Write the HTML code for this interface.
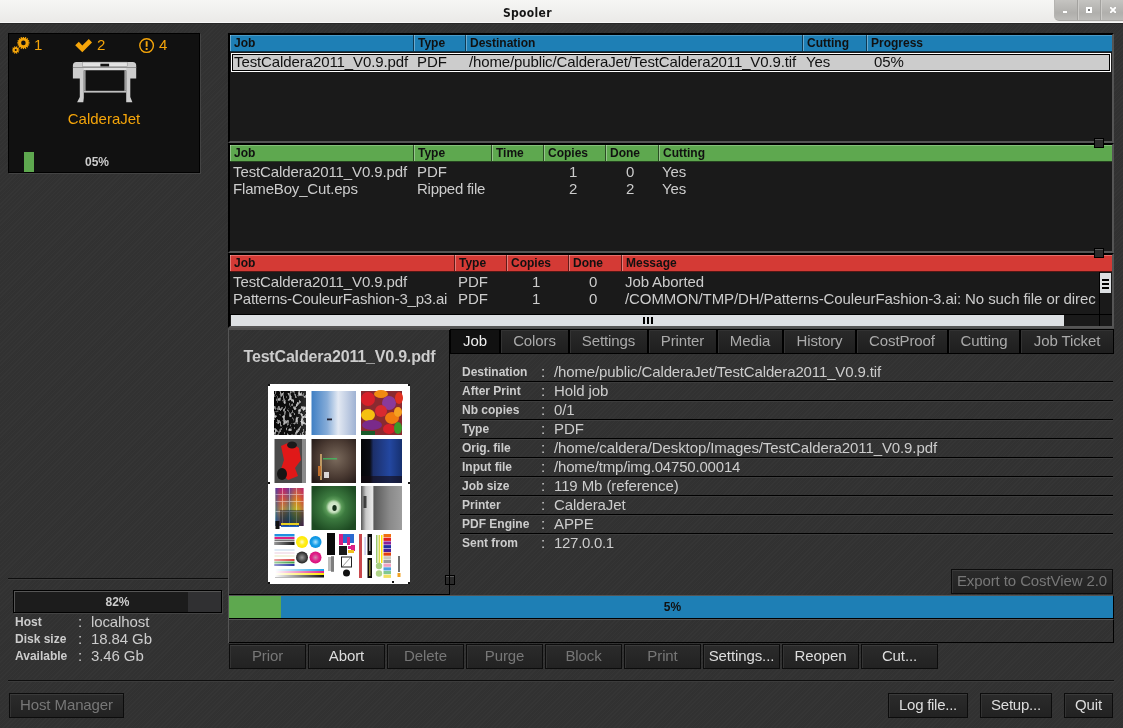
<!DOCTYPE html>
<html>
<head>
<meta charset="utf-8">
<title>Spooler</title>
<style>
*{box-sizing:border-box;margin:0;padding:0}
html,body{width:1123px;height:728px;overflow:hidden}
body{background:#323232 repeating-linear-gradient(135deg,rgba(255,255,255,.016) 0,rgba(255,255,255,.016) 1px,rgba(0,0,0,.012) 1px,rgba(0,0,0,.012) 3px);font-family:"Liberation Sans",sans-serif;font-size:15px;color:#ccc;position:relative}
.abs{position:absolute}
#titlebar{left:0;top:0;width:1123px;height:23px;background:linear-gradient(#f6f6f4,#ebeae8);border-bottom:1px solid #f8f8f8}
#title{left:503px;top:5px;font-family:"DejaVu Sans Condensed","DejaVu Sans",sans-serif;font-weight:bold;font-size:12px;color:#151515;letter-spacing:0.3px;line-height:16px}
#winbtns{left:1054px;top:0;width:69px;height:21px;background:linear-gradient(#c5c4c1,#b0afac 65%,#bcbbb8);border-bottom-left-radius:5px;border-left:1px solid #b5b4b1;border-bottom:1px solid #a8a7a4}
.wsep{top:0;width:1px;height:20px;background:#a3a29f;border-right:1px solid #cdccc9;box-sizing:content-box}
/* printer panel */
#ppanel{left:8px;top:33px;width:192px;height:140px;background:#111;border:1px solid #000;box-shadow:1px 1px 0 #444}
.org{color:#f5a50a}
/* tables */
.tbl{left:228px;width:886px;background:#1a1a1a;border-left:2px solid #000;border-top:2px solid #000;border-right:2px solid #555;border-bottom:2px solid #555}
.tbl>*{margin:-2px 0 0 -2px}
.hdr{left:2px;height:17px;border-bottom:1px solid rgba(0,0,0,.6);font-weight:bold;font-size:12px;color:#111;line-height:16px}
.hc{position:absolute;top:0;height:16px;padding-left:4px;border-right:1px solid rgba(0,0,0,.55);white-space:nowrap}
.hc:before{content:"";position:absolute;left:0;top:0;width:1px;height:16px;background:rgba(255,255,255,.35)}
.row{position:absolute;left:2px;height:17px;line-height:17px;white-space:nowrap;font-size:15px;color:#ccc;letter-spacing:-0.1px}
.row span{position:absolute;top:0}
/* buttons */
.btn{position:absolute;height:25px;border:1px solid #0c0c0c;background:linear-gradient(#2b2b2b,#222);box-shadow:inset 0 1px 0 #3a3a3a,inset 1px 0 0 #333;text-align:center;line-height:21px;font-size:15px;color:#ddd;white-space:nowrap;letter-spacing:-0.1px}
.btn.dis{color:#777}
.hline{position:absolute;height:2px;background:#0e0e0e;border-bottom:1px solid #3c3c3c}
.lab{position:absolute;font-weight:bold;font-size:12px;color:#ccc;white-space:nowrap}
.val{position:absolute;font-size:15px;color:#ccc;white-space:nowrap;letter-spacing:-0.1px}
.sash{width:10px;height:10px;background:#2b2b2b;border:1px solid #000;box-shadow:inset 0 1px 0 #585858}
.tab{position:absolute;top:330px;height:23px;background:linear-gradient(#2a2a2a,#1e1e1e);text-align:center;line-height:22px;font-size:15px;color:#aaa;white-space:nowrap;box-shadow:inset 1px 1px 0 #333;letter-spacing:-0.1px}
.tab.sel{background:#111;color:#eee;box-shadow:none}
body>*{will-change:transform}
</style>
</head>
<body>
<div id="titlebar" class="abs"></div>
<div class="abs" style="left:0;top:23px;width:1123px;height:1px;background:#272727"></div>
<div id="title" class="abs">Spooler</div>
<div id="winbtns" class="abs">
<div class="abs wsep" style="left:22px"></div><div class="abs wsep" style="left:45px"></div>
<div class="abs" style="left:8px;top:11px;width:4px;height:2px;background:#fff"></div>
<div class="abs" style="left:31px;top:7px;width:6px;height:6px;border:2px solid #fff;background:#777"></div>
<svg class="abs" style="left:55px;top:7px" width="6" height="6" viewBox="0 0 6 6"><path d="M0.800 0.800 L5.200 5.200 M5.200 0.800 L0.800 5.200" stroke="#fff" stroke-width="1.900" stroke-linecap="square"/></svg>
</div>

<!-- printer panel -->
<div id="ppanel" class="abs">
  <svg class="abs" style="left:3px;top:3px" width="20" height="20" viewBox="0 0 20 20"><g fill="#f5a50a"><circle cx="11.4" cy="5.9" r="5.2"/><g stroke="#f5a50a" stroke-width="1.3"><line x1="5.20" y1="5.90" x2="17.60" y2="5.90"/><line x1="5.67" y1="3.53" x2="17.13" y2="8.27"/><line x1="7.02" y1="1.52" x2="15.78" y2="10.28"/><line x1="9.03" y1="0.17" x2="13.77" y2="11.63"/><line x1="11.40" y1="-0.30" x2="11.40" y2="12.10"/><line x1="13.77" y1="0.17" x2="9.03" y2="11.63"/><line x1="15.78" y1="1.52" x2="7.02" y2="10.28"/><line x1="17.13" y1="3.53" x2="5.67" y2="8.27"/></g><circle cx="11.4" cy="5.9" r="2.3" fill="#111"/><circle cx="3.7" cy="13" r="2.7"/><g stroke="#f5a50a" stroke-width="1.1"><line x1="-0.10" y1="13.00" x2="7.50" y2="13.00"/><line x1="0.63" y1="10.77" x2="6.77" y2="15.23"/><line x1="2.53" y1="9.39" x2="4.87" y2="16.61"/><line x1="4.87" y1="9.39" x2="2.53" y2="16.61"/><line x1="6.77" y1="10.77" x2="0.63" y2="15.23"/></g><circle cx="3.7" cy="13" r="1.0" fill="#111"/></g></svg>
  <div class="abs org" style="left:25px;top:2px;line-height:17px">1</div>
  <svg class="abs" style="left:65px;top:5px" width="20" height="15" viewBox="0 0 20 15">
    <path d="M1.2 6.300 L4.800 2.800 L8.300 6.500 L14.800 0 L18 3.400 L8.300 13.200 Z" fill="#f5a50a"/>
  </svg>
  <div class="abs org" style="left:88px;top:2px;line-height:17px">2</div>
  <svg class="abs" style="left:129px;top:3px" width="18" height="18" viewBox="0 0 18 18">
    <circle cx="8.6" cy="8.600" r="6.800" fill="none" stroke="#f5a50a" stroke-width="1.400"/>
    <rect x="7.7" y="4.200" width="1.9" height="5.6" fill="#f5a50a"/>
    <rect x="7.7" y="11" width="1.9" height="2" fill="#f5a50a"/>
  </svg>
  <div class="abs org" style="left:150px;top:2px;line-height:17px">4</div>
  <svg class="abs" style="left:63px;top:27px" width="66" height="43" viewBox="0 0 66 43">
    <path d="M0.900 4.600 Q0.900 1.100 4.400 1.100 L60.700 1.100 Q64.200 1.100 64.200 4.600 L64.200 17.600 L0.900 17.600 Z" fill="#cdcdcd"/>
    <path d="M7.800 17 L11.800 17 L11.800 37 L11.300 41.300 L5.100 41.300 L7.800 36 Z" fill="#cdcdcd"/>
    <path d="M54.200 17 L58.300 17 L58.300 36 L60.400 41.300 L54.200 41.300 Z" fill="#cdcdcd"/>
    <rect x="11.800" y="29.800" width="42.400" height="1.800" fill="#c0c0c0"/>
    <rect x="0.900" y="6.100" width="63.300" height="0.900" fill="#8c8c8c"/>
    <rect x="11.800" y="7" width="42.400" height="2.500" fill="#dedede"/>
    <rect x="11.800" y="9.500" width="42.400" height="8.200" fill="#111"/>
    <rect x="11.800" y="9.500" width="2" height="20.300" fill="#9a9a9a"/>
    <rect x="52.200" y="9.500" width="2" height="20.300" fill="#9a9a9a"/>
    <rect x="13.800" y="9.500" width="38.400" height="19.400" fill="#111"/>
    <rect x="10.300" y="1.100" width="44.900" height="4.300" fill="#e2e2e2" stroke="#8a8a8a" stroke-width="0.500"/>
    <rect x="28.400" y="2.700" width="8.700" height="2.700" fill="#111"/>
  </svg>
  <div class="abs org" style="left:0;top:76px;width:190px;text-align:center;line-height:17px">CalderaJet</div>
  <div class="abs" style="left:15px;top:118px;width:10px;height:20px;background:#5ea84f"></div>
  <div class="abs" style="left:63px;top:121px;width:50px;text-align:center;font-weight:bold;font-size:12px;line-height:14px;color:#ccc">05%</div>
</div>

<!-- table 1 -->
<div class="abs tbl" id="t1" style="top:33px;height:110px">
  <div class="abs hdr" style="top:2px;width:882px;background:#1e7fb5;box-shadow:inset 0 1px 0 #4c9bc7">
    <div class="hc" style="left:0;width:184px">Job</div>
    <div class="hc" style="left:184px;width:52px">Type</div>
    <div class="hc" style="left:236px;width:337px">Destination</div>
    <div class="hc" style="left:573px;width:64px">Cutting</div>
    <div class="hc" style="left:637px;width:245px;border-right:0">Progress</div>
  </div>
  <div class="abs" style="left:3px;top:20px;width:880px;height:19px;background:#ccc;border:1px solid #fff;box-shadow:inset 0 0 0 1px #000"></div>
  <div class="row" style="top:19px;width:879px;height:19px;line-height:19px;color:#111">
    <span style="left:4px">TestCaldera2011_V0.9.pdf</span><span style="left:187px">PDF</span><span style="left:239px;letter-spacing:-0.13px">/home/public/CalderaJet/TestCaldera2011_V0.9.tif</span><span style="left:576px">Yes</span><span style="left:644px">05%</span>
  </div>
</div>
<!-- table 2 -->
<div class="abs tbl" id="t2" style="top:143px;height:110px">
  <div class="abs hdr" style="top:2px;width:882px;background:#5ea84f;box-shadow:inset 0 1px 0 #86c07a">
    <div class="hc" style="left:0;width:184px">Job</div>
    <div class="hc" style="left:184px;width:78px">Type</div>
    <div class="hc" style="left:262px;width:52px">Time</div>
    <div class="hc" style="left:314px;width:62px">Copies</div>
    <div class="hc" style="left:376px;width:53px">Done</div>
    <div class="hc" style="left:429px;width:453px;border-right:0">Cutting</div>
  </div>
  <div class="row" style="top:20px;width:879px">
    <span style="left:3px">TestCaldera2011_V0.9.pdf</span><span style="left:187px">PDF</span><span style="left:339px">1</span><span style="left:396px">0</span><span style="left:432px">Yes</span>
  </div>
  <div class="row" style="top:37px;width:879px">
    <span style="left:3px;letter-spacing:-0.17px">FlameBoy_Cut.eps</span><span style="left:187px;letter-spacing:-0.25px">Ripped file</span><span style="left:339px">2</span><span style="left:396px">2</span><span style="left:432px">Yes</span>
  </div>
</div>
<!-- table 3 -->
<div class="abs tbl" id="t3" style="top:253px;height:75px">
  <div class="abs hdr" style="top:2px;width:882px;background:#d43a35;box-shadow:inset 0 1px 0 #e5706b">
    <div class="hc" style="left:0;width:225px">Job</div>
    <div class="hc" style="left:225px;width:52px">Type</div>
    <div class="hc" style="left:277px;width:62px">Copies</div>
    <div class="hc" style="left:339px;width:53px">Done</div>
    <div class="hc" style="left:392px;width:490px;border-right:0">Message</div>
  </div>
  <div class="row" style="top:20px;width:868px;overflow:hidden">
    <span style="left:3px">TestCaldera2011_V0.9.pdf</span><span style="left:228px">PDF</span><span style="left:302px">1</span><span style="left:359px">0</span><span style="left:395px">Job Aborted</span>
  </div>
  <div class="row" style="top:37px;width:866px;overflow:hidden">
    <span style="left:3px;letter-spacing:-0.22px">Patterns-CouleurFashion-3_p3.ai</span><span style="left:228px">PDF</span><span style="left:302px">1</span><span style="left:359px">0</span><span style="left:395px;letter-spacing:-0.093px">/COMMON/TMP/DH/Patterns-CouleurFashion-3.ai: No such file or directory</span>
  </div>
</div>

<!-- scrollbars table 3 -->
<div class="abs" style="left:230px;top:314px;width:870px;height:12px;background:#1a1a1a;border-top:1px solid #000"></div>
<div class="abs" style="left:231px;top:315px;width:833px;height:11px;background:#dde0e3"></div>
<div class="abs" style="left:643px;top:317px;width:2px;height:7px;background:#000;box-shadow:4px 0 0 #000,8px 0 0 #000"></div>
<div class="abs" style="left:1099px;top:272px;width:13px;height:54px;background:#1a1a1a;border-left:1px solid #000"></div>
<div class="abs" style="left:1100px;top:273px;width:11px;height:20px;background:#dde0e3"></div>
<div class="abs" style="left:1102px;top:279px;width:7px;height:2px;background:#000;box-shadow:0 4px 0 #000,0 8px 0 #000"></div>
<div class="abs" style="left:1099px;top:314px;width:13px;height:1px;background:#000"></div>
<!-- sash handles -->
<div class="abs sash" style="left:1094px;top:138px"></div>
<div class="abs sash" style="left:1094px;top:248px"></div>
<div class="abs sash" style="left:445px;top:575px"></div>

<!-- details frame -->
<div class="abs" style="left:228px;top:328px;width:886px;height:315px;border-top:2px solid #4d4d4d;border-left:1px solid #555"></div>
<div class="abs" style="left:229px;top:330px;width:221px;height:265px;border-right:1px solid #000;border-bottom:1px solid #000"></div>
<div class="abs" style="left:229.500px;top:347px;width:219px;text-align:center;font-weight:bold;font-size:16px;line-height:20px;color:#ccc;letter-spacing:-0.18px">TestCaldera2011_V0.9.pdf</div>

<svg class="abs" style="left:268px;top:384px" width="142" height="200" viewBox="0 0 142 200">
<defs>
<linearGradient id="sky" x1="0" y1="0" x2="1" y2="0"><stop offset="0" stop-color="#3f7fc4"/><stop offset=".35" stop-color="#86acd8"/><stop offset=".6" stop-color="#e3e9f3"/><stop offset="1" stop-color="#9fb2d3"/></linearGradient>
<linearGradient id="bw" x1="0" y1="0" x2="1" y2="0"><stop offset="0" stop-color="#1b1b1b"/><stop offset=".7" stop-color="#3a3a3a"/><stop offset="1" stop-color="#9a9a9a"/></linearGradient>
<radialGradient id="city" cx=".55" cy=".45" r=".7"><stop offset="0" stop-color="#7a6a5c"/><stop offset=".6" stop-color="#4a3a32"/><stop offset="1" stop-color="#241a18"/></radialGradient>
<linearGradient id="nb" x1="0" y1="0" x2="1" y2="0"><stop offset="0" stop-color="#050608"/><stop offset=".22" stop-color="#0a0c14"/><stop offset=".3" stop-color="#1c2f6a"/><stop offset=".7" stop-color="#2347a0"/><stop offset="1" stop-color="#16306f"/></linearGradient>
<radialGradient id="grn" cx=".5" cy=".48" r=".6"><stop offset="0" stop-color="#e6f2e0"/><stop offset=".2" stop-color="#c5e0bd"/><stop offset=".3" stop-color="#5a9a58"/><stop offset=".45" stop-color="#3c7a3f"/><stop offset="1" stop-color="#1d4a22"/></radialGradient>
<linearGradient id="cl" x1="0" y1="0" x2="1" y2="0"><stop offset="0" stop-color="#555"/><stop offset=".12" stop-color="#c8c8c8"/><stop offset=".28" stop-color="#e8e8e8"/><stop offset=".32" stop-color="#5a5a5a"/><stop offset=".7" stop-color="#8a8a8a"/><stop offset="1" stop-color="#9d9d9d"/></linearGradient>
<linearGradient id="ch" x1="0" y1="0" x2="0" y2="1"><stop offset="0" stop-color="#b0207a"/><stop offset=".3" stop-color="#d86a20"/><stop offset=".55" stop-color="#b5b820"/><stop offset=".8" stop-color="#2a7a3a"/><stop offset="1" stop-color="#1a2a5a"/></linearGradient>
<linearGradient id="chx" x1="0" y1="0" x2="1" y2="0"><stop offset="0" stop-color="#2050b0" stop-opacity=".7"/><stop offset=".25" stop-color="#d02070" stop-opacity=".3"/><stop offset=".5" stop-color="#2050b0" stop-opacity=".5"/><stop offset=".75" stop-color="#e0a020" stop-opacity=".3"/><stop offset="1" stop-color="#c02060" stop-opacity=".5"/></linearGradient>
<radialGradient id="yel"><stop offset="0" stop-color="#fffbd0"/><stop offset=".5" stop-color="#ffee20"/><stop offset="1" stop-color="#ffe800"/></radialGradient>
<radialGradient id="cya"><stop offset="0" stop-color="#b0e4ff"/><stop offset=".6" stop-color="#18a0e8"/><stop offset="1" stop-color="#0a90e0"/></radialGradient>
<radialGradient id="blk"><stop offset="0" stop-color="#999"/><stop offset=".7" stop-color="#444"/><stop offset="1" stop-color="#222"/></radialGradient>
<radialGradient id="mag"><stop offset="0" stop-color="#d08ab0"/><stop offset=".6" stop-color="#e0208a"/><stop offset="1" stop-color="#d8107a"/></radialGradient>
<linearGradient id="fade" x1="0" y1="0" x2="1" y2="0"><stop offset="0" stop-color="#fff"/><stop offset="1" stop-color="#fff" stop-opacity="0"/></linearGradient>
<filter id="nz" x="0" y="0" width="1" height="1"><feTurbulence type="fractalNoise" baseFrequency="0.33 0.22" numOctaves="2" seed="7"/><feColorMatrix type="matrix" values="4.500 0 0 0 -2.350  4.500 0 0 0 -2.350  4.500 0 0 0 -2.350  0 0 0 0 1"/></filter>
<filter id="nz2" x="0" y="0" width="1" height="1"><feTurbulence type="fractalNoise" baseFrequency="0.12 0.05" numOctaves="3" seed="11"/><feColorMatrix type="matrix" values="1.600 0 0 0 -0.150  1.600 0 0 0 -0.150  1.600 0 0 0 -0.150  0 0 0 0 1"/></filter>
<filter id="bl"><feGaussianBlur stdDeviation="0.45"/></filter>
</defs>
<rect width="142" height="200" fill="#fff"/>
<g fill="#111"><rect x="0" y="0" width="2" height="2"/><rect x="140" y="0" width="2" height="2"/><rect x="0" y="98" width="2" height="2"/><rect x="140" y="98" width="2" height="2"/><rect x="0" y="198" width="2" height="2"/><rect x="140" y="198" width="2" height="2"/><rect x="124" y="197" width="2" height="2"/></g>
<!-- row1 -->
<rect x="6.500" y="7" width="31.500" height="44" fill="#333" filter="url(#nz)"/>
<rect x="6.500" y="7" width="31.500" height="44" fill="url(#bw)" opacity=".3"/>
<rect x="43.500" y="7" width="44.500" height="44" fill="url(#sky)"/>
<rect x="59" y="34.500" width="5" height="1.800" fill="#223"/>
<rect x="93" y="7" width="41" height="44" fill="#8a2a30"/>
<g><ellipse cx="100" cy="15" rx="7" ry="7" fill="#d8202a"/><ellipse cx="113" cy="10" rx="7" ry="4" fill="#f08a10"/><ellipse cx="121" cy="19" rx="7" ry="7" fill="#8a3a9a"/><ellipse cx="131" cy="14" rx="4" ry="6" fill="#e03020"/><ellipse cx="100" cy="31" rx="7" ry="6" fill="#f5c010"/><ellipse cx="113" cy="27" rx="6" ry="6" fill="#d82a30"/><ellipse cx="124" cy="34" rx="7" ry="6" fill="#f07a10"/><ellipse cx="104" cy="41" rx="10" ry="5" fill="#7a2a8a"/><ellipse cx="121" cy="45" rx="6" ry="5" fill="#d8202a"/><ellipse cx="130" cy="44" rx="4" ry="6" fill="#3a9a2a"/><ellipse cx="130" cy="28" rx="4" ry="5" fill="#f5a020"/><rect x="93" y="47" width="14" height="4" fill="#1a5a2a"/></g>
<!-- row2 -->
<rect x="6.500" y="55" width="31.500" height="44" fill="#4a4a4a"/>
<rect x="34" y="55" width="4" height="44" fill="#8a8a8a"/>
<path d="M13 62 L22 58 L31 64 L33 76 L27 84 L30 92 L20 96 L12 88 L16 76 Z" fill="#e01818"/>
<ellipse cx="14" cy="90" rx="5" ry="6" fill="#151515"/><ellipse cx="24" cy="61" rx="5" ry="3.500" fill="#1a1a1a"/>
<rect x="43.500" y="55" width="44.500" height="44" fill="url(#city)"/>
<g fill="#d8b070" opacity=".8"><rect x="52" y="70" width="2" height="26"/><rect x="55" y="74" width="14" height="1.500" fill="#40c060"/><rect x="50" y="82" width="3" height="10" fill="#e08030"/><rect x="56" y="88" width="5" height="6" fill="#fff"/></g>
<rect x="93" y="55" width="41" height="44" fill="url(#nb)"/>
<rect x="93" y="92" width="41" height="7" fill="#140a10" opacity=".6"/>
<!-- row3 -->
<rect x="6.500" y="102" width="31.500" height="44" fill="#fff"/>
<rect x="7.500" y="104" width="28" height="38" fill="url(#ch)"/><rect x="7.500" y="104" width="28" height="38" fill="url(#chx)"/>
<g fill="#fff" opacity=".5"><rect x="7.500" y="110" width="28" height=".8"/><rect x="7.500" y="117" width="28" height=".8"/><rect x="7.500" y="127" width="28" height=".8"/><rect x="14" y="104" width=".8" height="38"/><rect x="21" y="104" width=".8" height="38"/><rect x="28" y="104" width=".8" height="38"/></g>
<rect x="12" y="126" width="23.500" height="16" fill="#101830" opacity=".45"/><rect x="7.500" y="137" width="4" height="8" fill="#111"/><rect x="13" y="139" width="18" height="2" fill="#e8d020"/><rect x="13" y="141.500" width="18" height="1.500" fill="#2060c0"/>
<rect x="43.500" y="102" width="44.500" height="44" fill="url(#grn)"/>
<ellipse cx="66.500" cy="124" rx="2.200" ry="3" fill="#15301a"/>
<rect x="93" y="102" width="41" height="44" fill="url(#cl)"/>
<rect x="95.500" y="112" width="3" height="12" fill="#222" opacity=".8"/>
<!-- row4 -->
<g>
<rect x="6.500" y="150" width="20" height="2.500" fill="#2090e0"/><rect x="6.500" y="153" width="20" height="2" fill="#e02080"/><rect x="6.500" y="155.500" width="20" height="2" fill="#777"/><rect x="6.500" y="158" width="20" height="3" fill="#151515"/><rect x="6.500" y="157" width="20" height="4" fill="url(#fade)" opacity=".55"/>
<rect x="6.500" y="165" width="20" height="2" fill="#dfeaf5"/><rect x="6.500" y="168" width="20" height="2" fill="#f5e6ee"/><rect x="6.500" y="171" width="20" height="2" fill="#f3f3df"/>
<rect x="6.500" y="175" width="20" height="2" fill="#d84040"/><rect x="6.500" y="177.500" width="20" height="2" fill="#3a9a40"/><rect x="6.500" y="180" width="20" height="2" fill="#2a30a0"/><rect x="6.500" y="175" width="20" height="7" fill="url(#fade)" opacity=".5"/>
<circle cx="34" cy="158" r="6" fill="url(#yel)"/><circle cx="47.500" cy="158" r="6" fill="url(#cya)"/><circle cx="34" cy="173.500" r="6" fill="url(#blk)"/><circle cx="47.500" cy="173.500" r="6" fill="url(#mag)"/>
<rect x="7" y="185" width="49" height="2" fill="#18a0e8"/><rect x="7" y="187" width="49" height="2" fill="#e0208a"/><rect x="7" y="189" width="49" height="2" fill="#ffe800"/><rect x="7" y="191" width="49" height="2.500" fill="#111"/><rect x="7" y="185" width="49" height="8.500" fill="url(#fade)"/>
<rect x="59" y="149" width="8" height="22" fill="#0a0a0a"/><rect x="60" y="173" width="6" height="14" fill="#bbb"/><rect x="63" y="172" width="3" height="16" fill="#555" opacity=".6"/>
<rect x="71" y="150" width="15" height="9" fill="#2a6ad0"/><rect x="71" y="150" width="4" height="11" fill="#d82080"/><rect x="79" y="153" width="3" height="8" fill="#d82080"/><rect x="83" y="161" width="4" height="6" fill="#d82080"/><rect x="71" y="162" width="8" height="9" fill="#1a1a1a"/><rect x="80" y="166" width="6" height="3" fill="#f0c020"/><rect x="80" y="162" width="6" height="3" fill="#e0208a"/>
<rect x="73.500" y="173" width="10" height="10" fill="none" stroke="#222" stroke-width="1"/><line x1="74" y1="183" x2="83" y2="173" stroke="#555" stroke-width=".6"/>
<circle cx="78.500" cy="189" r="3.500" fill="#111"/>
<rect x="91" y="150" width="3" height="44" fill="#c8484c"/>
<rect x="96.500" y="153" width="1.200" height="18" fill="#9090e0" opacity=".6"/>
<rect x="99.500" y="150" width="4.500" height="21" fill="#0a0a0a"/><rect x="99.500" y="174" width="4.500" height="20" fill="#0a0a0a"/><rect x="101" y="176" width="1.500" height="16" fill="#c8c040" opacity=".7"/><rect x="101" y="153" width="1.500" height="14" fill="#ddd" opacity=".7"/>
<rect x="108" y="151" width="1.500" height="28" fill="#9ac870"/><rect x="110.500" y="151" width="1.500" height="28" fill="#d8d850"/><rect x="113" y="151" width="1.500" height="28" fill="#ffe800"/>
<rect x="115.500" y="150" width="7.500" height="3.200" fill="#f07010"/><rect x="115.500" y="153.700" width="7.500" height="3.200" fill="#e02020"/><rect x="115.500" y="157.400" width="7.500" height="3.200" fill="#8a209a"/><rect x="115.500" y="161.100" width="7.500" height="3.200" fill="#2030a0"/><rect x="115.500" y="164.800" width="7.500" height="3.200" fill="#4a209a"/><rect x="115.500" y="168.500" width="7.500" height="3.200" fill="#e04010"/><rect x="115.500" y="172.200" width="7.500" height="3.200" fill="#c8c8c0"/><rect x="115.500" y="175.900" width="7.500" height="3.200" fill="#9a9a9a"/><rect x="115.500" y="179.600" width="7.500" height="3.200" fill="#f0a0c0"/><rect x="115.500" y="183.300" width="7.500" height="3.200" fill="#50a0e0"/><rect x="115.500" y="187" width="7.500" height="3.200" fill="#80c890"/><rect x="115.500" y="190.700" width="7.500" height="3.200" fill="#f0e060"/>
<circle cx="111" cy="182" r="3.200" fill="#a8d080"/><circle cx="111" cy="189.500" r="3.200" fill="#b0d488"/>
<rect x="130" y="172" width="2" height="16" fill="#333" opacity=".7"/><rect x="129.500" y="189" width="3" height="4" fill="#f0a020"/>
</g>
</svg>
<!-- tabs -->
<div class="abs" style="left:450px;top:329px;width:664px;height:25px;background:#000"></div>
<div class="tab sel" style="left:451px;width:48px">Job</div><div class="tab" style="left:501px;width:67px">Colors</div><div class="tab" style="left:570px;width:77px">Settings</div><div class="tab" style="left:649px;width:67px">Printer</div><div class="tab" style="left:718px;width:64px">Media</div><div class="tab" style="left:784px;width:71px">History</div><div class="tab" style="left:857px;width:90px">CostProof</div><div class="tab" style="left:949px;width:70px">Cutting</div><div class="tab" style="left:1021px;width:92px">Job Ticket</div>
<!-- info -->
<div class="lab" style="left:462px;top:365px;line-height:14px">Destination</div><div class="val" style="left:541px;top:363px;line-height:17px">:</div><div class="val" style="left:554px;top:363px;line-height:17px;letter-spacing:-0.13px">/home/public/CalderaJet/TestCaldera2011_V0.9.tif</div>
<div class="abs" style="left:460px;top:381px;width:653px;height:2px;border-top:1px solid #000;border-bottom:1px solid #3d3d3d"></div>
<div class="lab" style="left:462px;top:384px;line-height:14px">After Print</div><div class="val" style="left:541px;top:382px;line-height:17px">:</div><div class="val" style="left:554px;top:382px;line-height:17px">Hold job</div>
<div class="abs" style="left:460px;top:400px;width:653px;height:2px;border-top:1px solid #000;border-bottom:1px solid #3d3d3d"></div>
<div class="lab" style="left:462px;top:403px;line-height:14px">Nb copies</div><div class="val" style="left:541px;top:401px;line-height:17px">:</div><div class="val" style="left:554px;top:401px;line-height:17px">0/1</div>
<div class="abs" style="left:460px;top:419px;width:653px;height:2px;border-top:1px solid #000;border-bottom:1px solid #3d3d3d"></div>
<div class="lab" style="left:462px;top:422px;line-height:14px">Type</div><div class="val" style="left:541px;top:420px;line-height:17px">:</div><div class="val" style="left:554px;top:420px;line-height:17px">PDF</div>
<div class="abs" style="left:460px;top:438px;width:653px;height:2px;border-top:1px solid #000;border-bottom:1px solid #3d3d3d"></div>
<div class="lab" style="left:462px;top:441px;line-height:14px">Orig. file</div><div class="val" style="left:541px;top:439px;line-height:17px">:</div><div class="val" style="left:554px;top:439px;line-height:17px">/home/caldera/Desktop/Images/TestCaldera2011_V0.9.pdf</div>
<div class="abs" style="left:460px;top:457px;width:653px;height:2px;border-top:1px solid #000;border-bottom:1px solid #3d3d3d"></div>
<div class="lab" style="left:462px;top:460px;line-height:14px">Input file</div><div class="val" style="left:541px;top:458px;line-height:17px">:</div><div class="val" style="left:554px;top:458px;line-height:17px;letter-spacing:-0.19px">/home/tmp/img.04750.00014</div>
<div class="abs" style="left:460px;top:476px;width:653px;height:2px;border-top:1px solid #000;border-bottom:1px solid #3d3d3d"></div>
<div class="lab" style="left:462px;top:479px;line-height:14px">Job size</div><div class="val" style="left:541px;top:477px;line-height:17px">:</div><div class="val" style="left:554px;top:477px;line-height:17px">119 Mb (reference)</div>
<div class="abs" style="left:460px;top:495px;width:653px;height:2px;border-top:1px solid #000;border-bottom:1px solid #3d3d3d"></div>
<div class="lab" style="left:462px;top:498px;line-height:14px">Printer</div><div class="val" style="left:541px;top:496px;line-height:17px">:</div><div class="val" style="left:554px;top:496px;line-height:17px">CalderaJet</div>
<div class="abs" style="left:460px;top:514px;width:653px;height:2px;border-top:1px solid #000;border-bottom:1px solid #3d3d3d"></div>
<div class="lab" style="left:462px;top:517px;line-height:14px">PDF Engine</div><div class="val" style="left:541px;top:515px;line-height:17px">:</div><div class="val" style="left:554px;top:515px;line-height:17px">APPE</div>
<div class="abs" style="left:460px;top:533px;width:653px;height:2px;border-top:1px solid #000;border-bottom:1px solid #3d3d3d"></div>
<div class="lab" style="left:462px;top:536px;line-height:14px">Sent from</div><div class="val" style="left:541px;top:534px;line-height:17px">:</div><div class="val" style="left:554px;top:534px;line-height:17px;letter-spacing:-0.3px">127.0.0.1</div>

<div class="btn dis" style="left:951px;top:569px;width:162px">Export to CostView 2.0</div>
<!-- progress -->
<div class="abs" style="left:229px;top:595px;width:885px;height:24px;background:#1e7fb5;border-top:1px solid #555;border-bottom:1px solid #000;border-right:1px solid #000"></div>
<div class="abs" style="left:229px;top:596px;width:52px;height:22px;background:#5ea84f"></div>
<div class="abs" style="left:230px;top:599px;width:885px;text-align:center;font-weight:bold;font-size:12px;line-height:16px;color:#111">5%</div>
<div class="abs" style="left:229px;top:619px;width:885px;height:24px;border-top:1px solid #555;border-bottom:1px solid #000;border-right:1px solid #000"></div>
<!-- action buttons -->
<div class="btn dis" style="left:229px;top:644px;width:77px">Prior</div>
<div class="btn" style="left:308px;top:644px;width:77px">Abort</div>
<div class="btn dis" style="left:387px;top:644px;width:77px">Delete</div>
<div class="btn dis" style="left:466px;top:644px;width:77px">Purge</div>
<div class="btn dis" style="left:545px;top:644px;width:77px">Block</div>
<div class="btn dis" style="left:624px;top:644px;width:77px">Print</div>
<div class="btn" style="left:703px;top:644px;width:77px">Settings...</div>
<div class="btn" style="left:782px;top:644px;width:77px">Reopen</div>
<div class="btn" style="left:861px;top:644px;width:77px">Cut...</div>
<!-- separators -->
<div class="hline" style="left:8px;top:578px;width:220px"></div>
<div class="hline" style="left:8px;top:680px;width:1106px"></div>
<!-- host panel -->
<div class="abs" style="left:13px;top:590px;width:209px;height:23px;background:#303032;border:1px solid #000;box-shadow:1px 1px 0 #444"></div>
<div class="abs" style="left:14px;top:591px;width:174px;height:21px;background:#1c1c1c"></div>
<div class="abs" style="left:14px;top:591px;width:207px;height:21px;border-top:1px solid #555;border-left:1px solid #555"></div>
<div class="abs" style="left:13px;top:594px;width:209px;text-align:center;font-weight:bold;font-size:12px;line-height:16px;color:#ccc">82%</div>
<div class="lab" style="left:15px;top:615px;line-height:14px">Host</div><div class="val" style="left:78px;top:613px;line-height:17px">:</div><div class="val" style="left:91px;top:613px;line-height:17px">localhost</div>
<div class="lab" style="left:15px;top:632px;line-height:14px">Disk size</div><div class="val" style="left:78px;top:630px;line-height:17px">:</div><div class="val" style="left:91px;top:630px;line-height:17px">18.84 Gb</div>
<div class="lab" style="left:15px;top:649px;line-height:14px">Available</div><div class="val" style="left:78px;top:647px;line-height:17px">:</div><div class="val" style="left:91px;top:647px;line-height:17px">3.46 Gb</div>
<!-- bottom buttons -->
<div class="btn dis" style="left:9px;top:693px;width:115px">Host Manager</div>
<div class="btn" style="left:888px;top:693px;width:80px;letter-spacing:-0.27px">Log file...</div>
<div class="btn" style="left:980px;top:693px;width:72px;letter-spacing:-0.22px">Setup...</div>
<div class="btn" style="left:1064px;top:693px;width:49px">Quit</div>
</body>
</html>
